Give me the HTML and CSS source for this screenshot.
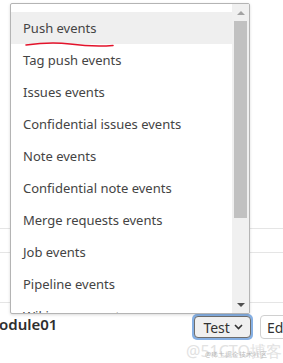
FILE: index.html
```html
<!DOCTYPE html>
<html lang="en">
<head>
  <meta charset="UTF-8">
  <title>Webhook events</title>
  <link rel="stylesheet" href="styles.css">
</head>
<body>
  <div class="page">
    <div class="rows">
      <div class="row row-tall"></div>
      <div class="row row-short"></div>
      <div class="row row-mid"></div>
    </div>
    <div class="hook">
      <span class="hook-name">odule01</span>
      <div class="actions">
        <span class="focus-ring"><button class="btn btn-test">Test
          <svg class="chev" width="9" height="6" viewBox="0 0 9 6"><path d="M1 1l3.5 3.5L8 1" fill="none" stroke="#333" stroke-width="1.6"/></svg>
        </button></span>
        <button class="btn btn-edit">Edit</button>
      </div>
    </div>
    <div class="watermark">@51CTO博客<span class="watermark-sub">@稀土掘金技术社区</span></div>

    <div class="menu">
      <ul class="menu-list">
        <li class="menu-item active">Push events</li>
        <li class="menu-item">Tag push events</li>
        <li class="menu-item">Issues events</li>
        <li class="menu-item">Confidential issues events</li>
        <li class="menu-item">Note events</li>
        <li class="menu-item">Confidential note events</li>
        <li class="menu-item">Merge requests events</li>
        <li class="menu-item">Job events</li>
        <li class="menu-item">Pipeline events</li>
        <li class="menu-item">Wiki page events</li>
      </ul>
      <div class="scrollbar">
        <span class="arrow arrow-up"></span>
        <span class="thumb"></span>
        <span class="arrow arrow-down"></span>
      </div>
      <svg class="scribble" width="96" height="8" viewBox="0 0 96 8">
        <path d="M1 4 C 15 2, 30 1, 45 3 S 70 6, 88 4.5" fill="none" stroke="#e3132b" stroke-width="1.6" stroke-linecap="round"/>
      </svg>
    </div>
  </div>
</body>
</html>
```
FILE: styles.css
```css
body {
  margin: 0;
  background-color: #fff;
  font-family: "Segoe UI", "Noto Sans", Arial, sans-serif;
  color: #333;
}

.page {
  position: relative;
  width: 283px;
  height: 363px;
  overflow: hidden;
}

/* rows of the page under the dropdown */
.rows {
  padding-top: 228px;
}

.row {
  border-top: 1px solid #e5e5e5;
}

.row-tall {
  height: 23px;
}

.row-mid {
  height: 0;
}

.row-short {
  height: 49px;
}

.hook {
  display: flex;
  align-items: center;
  height: 48px;
  margin-top: -2px;
}

.hook-name {
  font-size: 15px;
  font-weight: 600;
  color: #2e2e2e;
  margin-left: -1px;
  margin-top: -3px;
}

.actions {
  display: flex;
  align-items: center;
  gap: 7px;
  margin-left: 135px;
  margin-top: 4px;
  flex-shrink: 0;
}

.focus-ring {
  display: inline-flex;
  padding: 2px;
  border-radius: 5px;
  background-color: #86b0e4;
}

.btn {
  font-family: inherit;
  font-size: 14px;
  color: #333;
  height: 22px;
  padding: 0 7px 0 8px;
  border-radius: 4px;
  display: inline-flex;
  align-items: center;
  gap: 4px;
}

.btn-test {
  background-color: #f0f0f0;
  border: 1px solid #6e6e6e;
}

.btn-edit {
  background-color: #fff;
  border: 1px solid #d0d0d0;
  height: 24px;
  padding-left: 6px;
}

.watermark {
  position: absolute;
  left: 186px;
  top: 340px;
  font-size: 16px;
  color: #e2e2e2;
  white-space: nowrap;
}

.watermark-sub {
  position: absolute;
  left: 19px;
  top: 10px;
  font-size: 7px;
  color: #b9b9b9;
}

/* dropdown menu */
.menu {
  position: absolute;
  left: 10px;
  top: 3px;
  width: 238px;
  height: 309px;
  border: 1px solid #b4b4b4;
  border-radius: 2px;
  background-color: #fff;
  box-shadow: 0 1px 3px rgba(0, 0, 0, 0.15);
  display: flex;
  overflow: hidden;
}

.menu-list {
  list-style: none;
  margin: 0;
  padding: 8px 0 0 0;
  flex: 1;
}

.menu-item {
  height: 32px;
  line-height: 32px;
  padding-left: 12px;
  font-size: 13px;
  color: #444;
  white-space: nowrap;
}

.menu-item.active {
  background-color: #efefef;
}

.scrollbar {
  width: 17px;
  background-color: #f0f0f0;
  display: flex;
  flex-direction: column;
  align-items: center;
}

.arrow {
  width: 0;
  height: 0;
  border-left: 4px solid transparent;
  border-right: 4px solid transparent;
}

.arrow-up {
  margin-top: 7px;
  border-bottom: 4px solid #a3a3a3;
}

.thumb {
  width: 13px;
  height: 197px;
  margin-top: 6px;
  background-color: #c1c1c1;
}

.arrow-down {
  margin-top: auto;
  margin-bottom: 6px;
  border-top: 4px solid #505050;
}

.scribble {
  position: absolute;
  left: 14px;
  top: 37px;
}
```
